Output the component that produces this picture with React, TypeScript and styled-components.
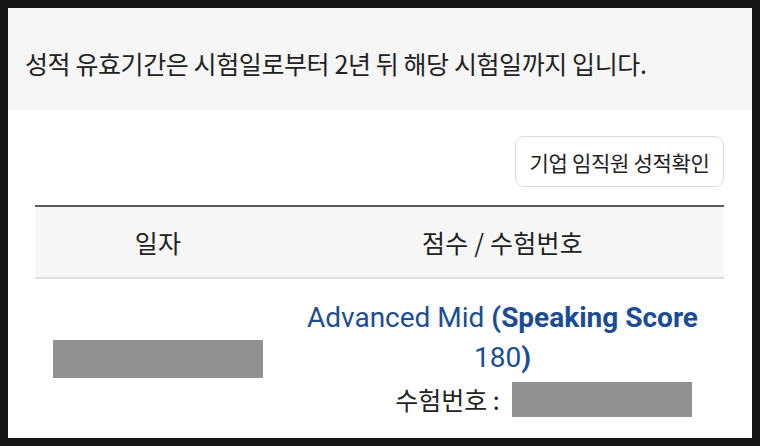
import styled, { createGlobalStyle } from 'styled-components';

const GlobalStyle = createGlobalStyle`
  html, body {
    margin: 0;
    padding: 0;
    background: #151515;
  }
  body {
    padding: 8px;
    font-family: "Noto Sans CJK KR", "Noto Sans", sans-serif;
    color: #222;
  }
`;

const Page = styled.main`
  background: #fff;
  height: 430px;
  overflow: hidden;
  width: 744px;
`;

const Notice = styled.section`
  align-items: center;
  background: #f6f6f6;
  box-sizing: border-box;
  display: flex;
  font-size: 25px;
  height: 102px;
  letter-spacing: -0.4px;
  padding: 8px 17px 0;
`;

const Toolbar = styled.div`
  display: flex;
  justify-content: flex-end;
  padding: 26px 28px 18px 27px;
`;

const CheckButton = styled.button`
  background: #fff;
  border: 1px solid #dcdcdc;
  border-radius: 9px;
  color: #222;
  cursor: pointer;
  font-family: inherit;
  font-size: 21px;
  height: 51px;
  letter-spacing: -0.3px;
  padding: 0;
  width: 209px;
`;

const Table = styled.table`
  border-collapse: collapse;
  margin: 0 28px 0 27px;
  width: 689px;
`;

const HeadCell = styled.th<{ $width?: number }>`
  background: #f7f7f7;
  border-bottom: 2px solid #dedede;
  border-top: 2px solid #5a5a5a;
  font-size: 25px;
  font-weight: 400;
  height: 70px;
  letter-spacing: 0.2px;
  padding: 0;
  text-align: center;
  width: ${(p) => (p.$width ? `${p.$width}px` : 'auto')};
`;

const Cell = styled.td`
  padding: 19px 0;
  text-align: center;
  vertical-align: middle;
`;

const Masked = styled.span<{ $w: number; $h: number }>`
  background: #919191;
  display: inline-block;
  height: ${(p) => p.$h}px;
  vertical-align: middle;
  width: ${(p) => p.$w}px;
`;

const Score = styled.div`
  color: #1b4d97;
  font-family: Roboto, "Noto Sans", sans-serif;
  font-size: 28px;
  line-height: 40px;
  padding: 0 8px;

  strong {
    font-weight: 700;
  }
`;

const ExamNo = styled.div`
  align-items: center;
  display: flex;
  font-size: 25px;
  gap: 12px;
  justify-content: center;
  line-height: 42px;
  padding-left: 82px;
`;

export default function App() {
  return (
    <>
      <GlobalStyle />
      <Page>
        <Notice>성적 유효기간은 시험일로부터 2년 뒤 해당 시험일까지 입니다.</Notice>
        <Toolbar>
          <CheckButton type="button">기업 임직원 성적확인</CheckButton>
        </Toolbar>
        <Table>
          <thead>
            <tr>
              <HeadCell $width={246}>일자</HeadCell>
              <HeadCell>점수 / 수험번호</HeadCell>
            </tr>
          </thead>
          <tbody>
            <tr>
              <Cell>
                <Masked $w={210} $h={38} />
              </Cell>
              <Cell>
                <Score>
                  Advanced Mid <strong>(Speaking Score</strong> 180<strong>)</strong>
                </Score>
                <ExamNo>
                  수험번호 :
                  <Masked $w={180} $h={35} />
                </ExamNo>
              </Cell>
            </tr>
          </tbody>
        </Table>
      </Page>
    </>
  );
}
